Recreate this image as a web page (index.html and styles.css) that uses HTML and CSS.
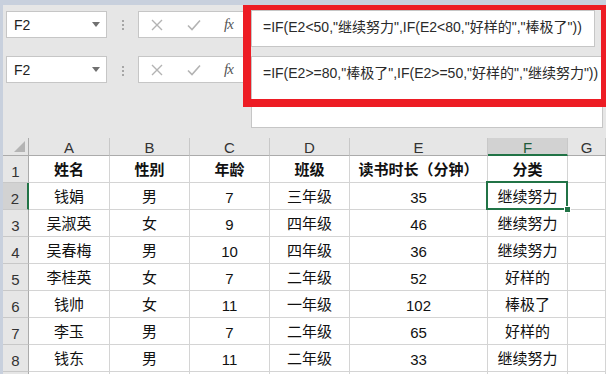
FILE: index.html
```
<!DOCTYPE html>
<html lang="zh-CN">
<head>
    <meta charset="UTF-8">
    <title>分类公式</title>
    <link rel="stylesheet" href="styles.css">
</head>
<body>
    <div class="window">
        <div class="bars">
            <div class="bar">
                <div class="namebox"><span>F2</span><i class="caret"></i></div>
                <div class="grip"><i></i><i></i><i></i></div>
                <div class="tools">
                    <svg class="tool" width="12" height="12" viewBox="0 0 12 12"><path d="M1 1 L11 11 M11 1 L1 11" stroke="#b3b3b3" stroke-width="1.4" fill="none"/></svg>
                    <svg class="tool" width="14" height="12" viewBox="0 0 14 12"><path d="M1 6.5 L5 10.5 L13 1.5" stroke="#b3b3b3" stroke-width="1.6" fill="none"/></svg>
                    <span class="fx">fx</span>
                </div>
                <div class="formula">=IF(E2&lt;50,"继续努力",IF(E2&lt;80,"好样的","棒极了"))</div>
            </div>
            <div class="bar bar-tall">
                <div class="namebox"><span>F2</span><i class="caret"></i></div>
                <div class="grip"><i></i><i></i><i></i></div>
                <div class="tools">
                    <svg class="tool" width="12" height="12" viewBox="0 0 12 12"><path d="M1 1 L11 11 M11 1 L1 11" stroke="#b3b3b3" stroke-width="1.4" fill="none"/></svg>
                    <svg class="tool" width="14" height="12" viewBox="0 0 14 12"><path d="M1 6.5 L5 10.5 L13 1.5" stroke="#b3b3b3" stroke-width="1.6" fill="none"/></svg>
                    <span class="fx">fx</span>
                </div>
                <div class="formula">=IF(E2&gt;=80,"棒极了",IF(E2&gt;=50,"好样的","继续努力"))</div>
            </div>
        </div>

        <div class="sheet">
            <div class="corner"></div>
            <div class="colhead">A</div>
            <div class="colhead">B</div>
            <div class="colhead">C</div>
            <div class="colhead">D</div>
            <div class="colhead">E</div>
            <div class="colhead active">F</div>
            <div class="colhead">G</div>

            <div class="rowhead">1</div>
            <div class="cell head">姓名</div><div class="cell head">性别</div><div class="cell head">年龄</div><div class="cell head">班级</div><div class="cell head">读书时长（分钟）</div><div class="cell head">分类</div><div class="cell"></div>

            <div class="rowhead active">2</div>
            <div class="cell">钱娟</div><div class="cell">男</div><div class="cell">7</div><div class="cell">三年级</div><div class="cell">35</div><div class="cell selected">继续努力</div><div class="cell"></div>

            <div class="rowhead">3</div>
            <div class="cell">吴淑英</div><div class="cell">女</div><div class="cell">9</div><div class="cell">四年级</div><div class="cell">46</div><div class="cell">继续努力</div><div class="cell"></div>

            <div class="rowhead">4</div>
            <div class="cell">吴春梅</div><div class="cell">男</div><div class="cell">10</div><div class="cell">四年级</div><div class="cell">36</div><div class="cell">继续努力</div><div class="cell"></div>

            <div class="rowhead">5</div>
            <div class="cell">李桂英</div><div class="cell">女</div><div class="cell">7</div><div class="cell">二年级</div><div class="cell">52</div><div class="cell">好样的</div><div class="cell"></div>

            <div class="rowhead">6</div>
            <div class="cell">钱帅</div><div class="cell">女</div><div class="cell">11</div><div class="cell">一年级</div><div class="cell">102</div><div class="cell">棒极了</div><div class="cell"></div>

            <div class="rowhead">7</div>
            <div class="cell">李玉</div><div class="cell">男</div><div class="cell">7</div><div class="cell">二年级</div><div class="cell">65</div><div class="cell">好样的</div><div class="cell"></div>

            <div class="rowhead">8</div>
            <div class="cell">钱东</div><div class="cell">男</div><div class="cell">11</div><div class="cell">二年级</div><div class="cell">33</div><div class="cell">继续努力</div><div class="cell"></div>

            <div class="rowhead"></div>
            <div class="cell"></div><div class="cell"></div><div class="cell"></div><div class="cell"></div><div class="cell"></div><div class="cell"></div><div class="cell"></div>
        </div>
    </div>

    <div class="callout"></div>
</body>
</html>
```

FILE: styles.css
```
body {
    margin: 0;
    width: 606px;
    height: 374px;
    overflow: hidden;
    background-color: #e6e6e6;
    font-family: "Liberation Sans", "Noto Sans CJK SC", sans-serif;
    color: #1a1a1a;
}
.window {
    box-sizing: border-box;
    height: 374px;
    border-top: 5px solid #c8d0dd;
    border-left: 3px solid #c8d0dd;
    overflow: hidden;
}
.bars {
    padding-bottom: 10px;
}
.bar {
    display: flex;
    align-items: flex-start;
    margin-top: 5px;
}
.bar-tall {
    margin-top: 9px;
}
.namebox {
    box-sizing: border-box;
    width: 101px;
    height: 27px;
    margin: 1px 0 0 3px;
    background-color: #fff;
    border: 1px solid #c6c6c6;
    display: flex;
    align-items: center;
    justify-content: space-between;
    padding: 0 6px 0 7px;
    font-size: 14px;
    color: #222;
}
.bar-tall .namebox {
    margin-top: 0;
}
.caret {
    width: 0;
    height: 0;
    border-left: 4px solid transparent;
    border-right: 4px solid transparent;
    border-top: 5px solid #707070;
}
.grip {
    width: 31px;
    display: flex;
    flex-direction: column;
    align-items: center;
    gap: 2px;
    padding-top: 10px;
}
.grip i {
    width: 2px;
    height: 2px;
    background-color: #a6a6a6;
}
.tools {
    box-sizing: border-box;
    width: 106px;
    height: 27px;
    margin-top: 1px;
    background-color: #fff;
    border: 1px solid #c6c6c6;
    display: flex;
    align-items: center;
    padding-left: 12px;
}
.bar-tall .tools {
    margin-top: 0;
}
.tool {
    margin-right: 24px;
}
.tool + .tool {
    margin-right: 23px;
}
.fx {
    font-family: "Liberation Serif", serif;
    font-style: italic;
    font-size: 15px;
    color: #555;
    letter-spacing: -1px;
}
.formula {
    box-sizing: border-box;
    flex: 1;
    height: 37px;
    margin: 0 11px 0 7px;
    background-color: #fff;
    border: 1px solid #c6c6c6;
    padding: 5px 0 0 11px;
    font-size: 14px;
    color: #2a2a2a;
    white-space: nowrap;
}
.bar-tall .formula {
    height: 72px;
    margin-right: 3px;
}
.callout {
    position: absolute;
    left: 243px;
    top: 5px;
    box-sizing: border-box;
    width: 366px;
    height: 102px;
    border: 8px solid #ed1c24;
    border-top-width: 5px;
}
.sheet {
    display: grid;
    grid-template-columns: 26px 81px 80px 80px 80px 138px 80px 1fr;
    grid-template-rows: 18px repeat(9, 27px);
    background-color: #fff;
    font-size: 15px;
}
.corner,
.colhead,
.rowhead {
    box-sizing: border-box;
    background-color: #e6e6e6;
    color: #333;
}
.corner {
    position: relative;
    border-right: 1px solid #ababab;
    border-bottom: 1px solid #ababab;
}
.corner::after {
    content: "";
    position: absolute;
    right: 3px;
    bottom: 3px;
    border-left: 11px solid transparent;
    border-bottom: 11px solid #b4b4b4;
}
.colhead {
    display: flex;
    align-items: center;
    justify-content: center;
    border-right: 1px solid #c8c8c8;
    border-bottom: 1px solid #ababab;
    padding-top: 2px;
}
.colhead.active {
    background-color: #d2d2d2;
    border-bottom: 2px solid #217346;
    color: #1e5c3b;
}
.rowhead {
    display: flex;
    align-items: flex-end;
    justify-content: center;
    padding-bottom: 2px;
    border-right: 1px solid #ababab;
    border-bottom: 1px solid #c8c8c8;
}
.rowhead.active {
    background-color: #d2d2d2;
    border-right: 2px solid #217346;
}
.cell {
    box-sizing: border-box;
    display: flex;
    align-items: flex-end;
    justify-content: center;
    padding-bottom: 3px;
    border-right: 1px solid #d4d4d4;
    border-bottom: 1px solid #d4d4d4;
    white-space: nowrap;
    color: #111;
}
.cell.head {
    font-weight: bold;
}
.cell.selected {
    position: relative;
}
.cell.selected::before {
    content: "";
    position: absolute;
    top: -2px;
    left: -2px;
    right: -1px;
    bottom: -1px;
    border: 2px solid #217346;
}
.cell.selected::after {
    content: "";
    position: absolute;
    right: -4px;
    bottom: -4px;
    width: 5px;
    height: 5px;
    background-color: #217346;
    border: 1px solid #fff;
}
```
